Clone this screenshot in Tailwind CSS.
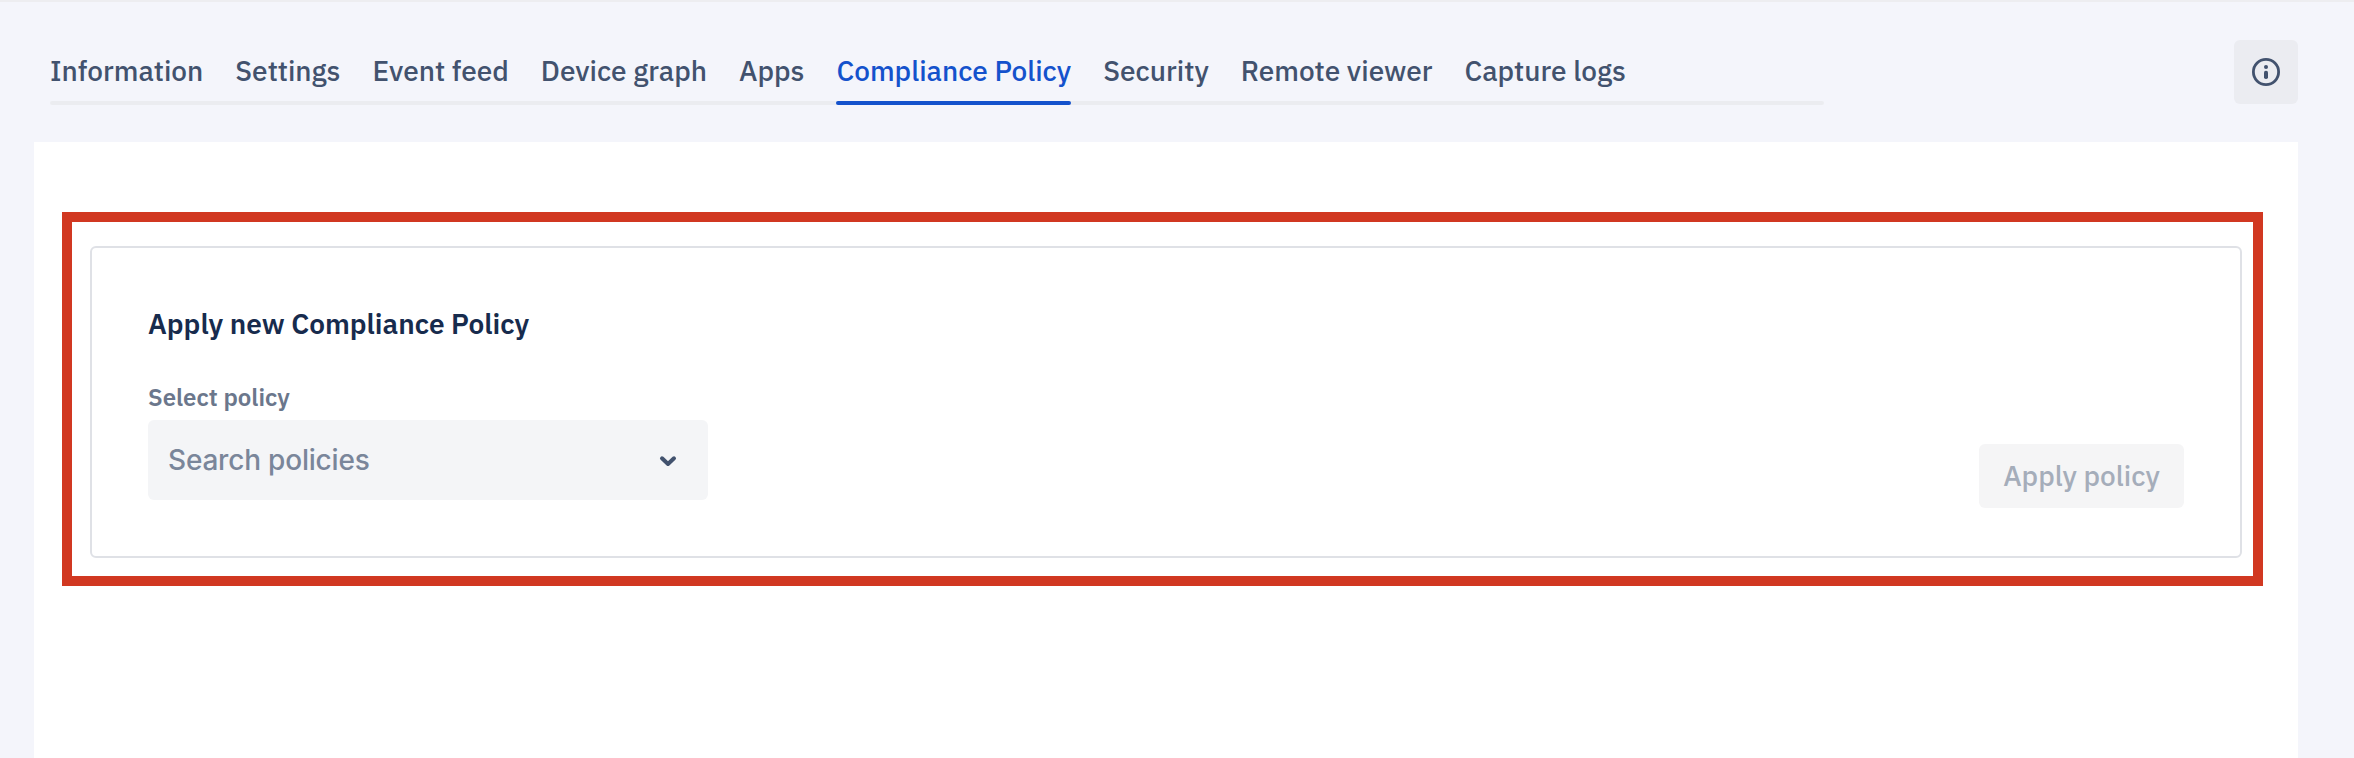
<!DOCTYPE html>
<html lang="en">
<head>
<meta charset="utf-8">
<title>Compliance Policy</title>
<script src="https://cdn.jsdelivr.net/npm/@tailwindcss/browser@4"></script>
</head>
<body class="h-[758px] overflow-hidden bg-[#f4f5fb] font-['IBM_Plex_Sans',Roboto,sans-serif]">
<div class="flex h-full flex-col border-t-2 border-[#ededf0] pr-14 pl-[34px]">
  <header class="flex h-[140px] shrink-0 items-start justify-between pt-[38px] pl-4">
    <nav class="relative flex h-[65px] w-[1774px] gap-8 pt-[11px] text-[28px] leading-10 font-medium whitespace-nowrap text-[#42526e]">
      <div class="absolute inset-x-0 bottom-0 h-1 rounded-sm bg-[#ebecf0]"></div>
      <a>Information</a>
      <a>Settings</a>
      <a>Event feed</a>
      <a>Device graph</a>
      <a>Apps</a>
      <a class="relative text-[#1452cc]">Compliance Policy<span class="absolute inset-x-0 bottom-0 h-1 rounded-xs bg-[#1452cc]"></span></a>
      <a>Security</a>
      <a>Remote viewer</a>
      <a>Capture logs</a>
    </nav>
    <button class="flex size-16 items-center justify-center rounded-md bg-[#ebecf1] text-[#42526e]" aria-label="Info">
      <svg class="size-8" viewBox="0 0 32 32" fill="none">
        <circle cx="16" cy="16" r="12.6" stroke="currentColor" stroke-width="2.8"/>
        <circle cx="16" cy="11" r="2" fill="currentColor"/>
        <rect x="14" y="14.8" width="4" height="8.2" rx="1.8" fill="currentColor"/>
      </svg>
    </button>
  </header>
  <main class="grow bg-white pt-[70px] pr-[35px] pl-7">
    <div class="h-[374px] border-10 border-[#d13821] pt-6 pr-[11px] pl-[18px]">
      <section class="h-[312px] rounded-md border-2 border-[#dfe1e6] px-14 pt-14">
        <h2 class="text-[28px] leading-10 font-semibold text-[#172b4d]">Apply new Compliance Policy</h2>
        <div class="flex items-end justify-between pt-[37px]">
          <div class="pb-2">
            <label class="block text-2xl leading-8 font-semibold text-[#6b778c]">Select policy</label>
            <div class="mt-[7px] flex h-20 w-[560px] items-center justify-between rounded-md bg-[#f4f5f7] pr-6 pl-5">
              <span class="font-[Inter,sans-serif] text-[28px] font-[450] tracking-[-0.2px] text-[#7a869a]">Search policies</span>
              <svg class="h-8 w-8 text-[#42526e]" viewBox="0 0 32 32" fill="none"><path d="M10 14.3l6 5.7 6-5.7" stroke="currentColor" stroke-width="4" stroke-linecap="round" stroke-linejoin="round"/></svg>
            </div>
          </div>
          <button class="h-16 w-[205px] rounded-md bg-[#f5f5f6] text-[28px] font-medium text-[#a5adba]">Apply policy</button>
        </div>
      </section>
    </div>
  </main>
</div>
</body>
</html>
